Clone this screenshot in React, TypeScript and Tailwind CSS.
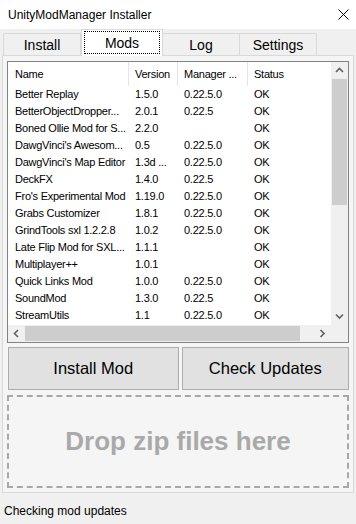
import React from "react"

const mods = [
  ["Better Replay", "1.5.0", "0.22.5.0", "OK"],
  ["BetterObjectDropper...", "2.0.1", "0.22.5", "OK"],
  ["Boned Ollie Mod for S...", "2.2.0", "", "OK"],
  ["DawgVinci's Awesom...", "0.5", "0.22.5.0", "OK"],
  ["DawgVinci's Map Editor", "1.3d ...", "0.22.5.0", "OK"],
  ["DeckFX", "1.4.0", "0.22.5", "OK"],
  ["Fro's Experimental Mod", "1.19.0", "0.22.5.0", "OK"],
  ["Grabs Customizer", "1.8.1", "0.22.5.0", "OK"],
  ["GrindTools sxl 1.2.2.8", "1.0.2", "0.22.5.0", "OK"],
  ["Late Flip Mod for SXL...", "1.1.1", "", "OK"],
  ["Multiplayer++", "1.0.1", "", "OK"],
  ["Quick Links Mod", "1.0.0", "0.22.5.0", "OK"],
  ["SoundMod", "1.3.0", "0.22.5", "OK"],
  ["StreamUtils", "1.1", "0.22.5.0", "OK"],
]

const tabs = ["Install", "Mods", "Log", "Settings"]

function Chevron({ dir }: { dir: "up" | "down" | "left" | "right" }) {
  const d = {
    up: "M1 5 L4.5 1.5 L8 5",
    down: "M1 1.5 L4.5 5 L8 1.5",
    left: "M5 1 L1.5 4.5 L5 8",
    right: "M1.5 1 L5 4.5 L1.5 8",
  }[dir]
  const vert = dir === "up" || dir === "down"
  return (
    <svg width={vert ? 9 : 7} height={vert ? 7 : 9} viewBox={vert ? "0 0 9 7" : "0 0 7 9"}>
      <path d={d} fill="none" stroke="#606060" strokeWidth="1.6" />
    </svg>
  )
}

export default function App() {
  return (
    <div className="w-[356px] h-[524px] bg-[#f0f0f0] flex flex-col overflow-hidden text-black" style={{ fontFamily: "'Liberation Sans', Arial, sans-serif" }}>

      {/* Title bar */}
      <div className="h-[29px] bg-white flex items-center justify-between pl-[8px] pr-[7px] shrink-0">
        <span className="text-[12px]">UnityModManager Installer</span>
        <svg width="11" height="11" viewBox="0 0 11 11">
          <path d="M0.5 0.5 L10.5 10.5 M10.5 0.5 L0.5 10.5" stroke="#000" strokeWidth="1" />
        </svg>
      </div>

      {/* Tabs */}
      <div className="h-[26px] flex items-end pl-[3px] shrink-0 relative z-10">
        {tabs.map(t => t === "Mods" ? (
          <div key={t} className="w-[82px] h-[27px] -mb-[1px] bg-white border border-b-0 border-[#d9d9d9] flex items-start justify-center pt-[1px] px-[2px]">
            <div className="w-full h-[23px] border border-dotted border-black flex items-center justify-center text-[14px] pt-[1px]">{t}</div>
          </div>
        ) : (
          <div key={t} className="w-[78px] h-[22px] bg-[#f0f0f0] border border-b-0 border-[#d9d9d9] -ml-[1px] first:ml-0 flex items-center justify-center text-[14px] pt-[1px]">{t}</div>
        ))}
      </div>

      {/* Tab page */}
      <div className="mx-[2px] h-[438px] border border-[#d9d9d9] bg-[#f5f5f5] p-[4px] pt-[5px] flex flex-col shrink-0">

        {/* List view */}
        <div className="h-[282px] border border-[#828282] bg-white flex flex-col">
          <div className="flex-1 flex min-h-0">
            <div className="flex-1 overflow-hidden text-[11px] tracking-[-0.25px]">
              <div className="h-[24px] flex items-center">
                <div className="w-[121px] pl-[7px] h-full flex items-center border-r border-[#e5e5e5]">Name</div>
                <div className="w-[49px] pl-[6px] h-full flex items-center border-r border-[#e5e5e5]">Version</div>
                <div className="w-[70px] pl-[6px] h-full flex items-center border-r border-[#e5e5e5] whitespace-nowrap">Manager ...</div>
                <div className="flex-1 pl-[6px] h-full flex items-center">Status</div>
              </div>
              {mods.map(m => (
                <div key={m[0]} className="h-[17px] flex items-center whitespace-nowrap">
                  <div className="w-[121px] pl-[7px] overflow-hidden">{m[0]}</div>
                  <div className="w-[49px] pl-[6px] overflow-hidden">{m[1]}</div>
                  <div className="w-[70px] pl-[6px] overflow-hidden">{m[2]}</div>
                  <div className="flex-1 pl-[6px]">{m[3]}</div>
                </div>
              ))}
            </div>
            {/* vertical scrollbar */}
            <div className="w-[17px] bg-[#f0f0f0] flex flex-col items-center">
              <div className="h-[17px] w-full flex items-center justify-center"><Chevron dir="up" /></div>
              <div className="w-[15px] h-[126px] bg-[#cdcdcd]" />
              <div className="flex-1" />
              <div className="h-[17px] w-full flex items-center justify-center"><Chevron dir="down" /></div>
            </div>
          </div>
          {/* horizontal scrollbar */}
          <div className="h-[17px] flex shrink-0">
            <div className="flex-1 bg-[#f0f0f0] flex items-center">
              <div className="w-[17px] h-full flex items-center justify-center"><Chevron dir="left" /></div>
              <div className="w-[275px] h-[15px] bg-[#cdcdcd]" />
              <div className="flex-1" />
              <div className="w-[17px] h-full flex items-center justify-center"><Chevron dir="right" /></div>
            </div>
            <div className="w-[17px] bg-[#f0f0f0]" />
          </div>
        </div>

        {/* Buttons */}
        <div className="flex gap-[3px] mt-[4px] pl-[1px]">
          <button className="w-[171px] h-[43px] bg-[#e1e1e1] border border-[#adadad] text-[16.5px]">Install Mod</button>
          <button className="w-[168px] h-[43px] bg-[#e1e1e1] border border-[#adadad] text-[16.5px]">Check Updates</button>
        </div>

        {/* Drop zone */}
        <div className="mt-[5px] h-[93px] border-2 border-dashed border-[#a8a8a8] flex items-center justify-center">
          <span className="text-[26px] font-bold text-[#a9a9a9]">Drop zip files here</span>
        </div>
      </div>

      {/* Status bar */}
      <div className="flex-1 flex items-center pl-[4px] pt-[4px] text-[12px]">Checking mod updates</div>
    </div>
  )
}
